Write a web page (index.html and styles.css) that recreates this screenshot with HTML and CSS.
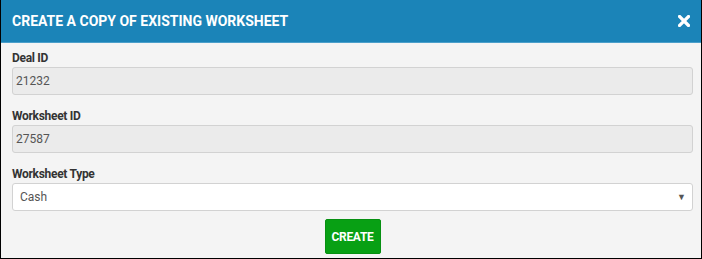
FILE: index.html
```html
<!DOCTYPE html>
<html>
<head>
<meta charset="utf-8">
<link rel="stylesheet" href="styles.css">
</head>
<body>
<div class="dialog">
  <div class="dialog-header">
    <h1 class="dialog-title">CREATE A COPY OF EXISTING WORKSHEET</h1>
    <span class="close" aria-label="close">
      <svg width="12" height="12" viewBox="0 0 12 12"><path d="M1.5 1.5 L10.5 10.5 M10.5 1.5 L1.5 10.5" stroke="#fff" stroke-width="3.2" stroke-linecap="square"/></svg>
    </span>
  </div>
  <div class="dialog-body">
    <div class="field">
      <label class="field-label">Deal ID</label>
      <div class="input readonly">21232</div>
    </div>
    <div class="field">
      <label class="field-label">Worksheet ID</label>
      <div class="input readonly">27587</div>
    </div>
    <div class="field last">
      <label class="field-label">Worksheet Type</label>
      <div class="input select"><span>Cash</span><span class="caret">&#9660;</span></div>
    </div>
    <div class="actions">
      <button class="btn-create">CREATE</button>
    </div>
  </div>
</div>
</body>
</html>
```
FILE: styles.css
```css
html, body {
  margin: 0;
  padding: 0;
}
body {
  width: 702px;
  height: 259px;
  font-family: Roboto, "Liberation Sans", sans-serif;
  background: #f4f4f4;
}
.dialog {
  box-sizing: border-box;
  width: 702px;
  height: 259px;
  border: 1px solid #000;
  border-top: none;
  background: #f4f4f4;
  display: flex;
  flex-direction: column;
}
.dialog-header {
  height: 42px;
  background: #1b84b8;
  border-bottom: 1px solid #4b9fca;
  display: flex;
  align-items: center;
  justify-content: space-between;
  padding: 0 11px 0 11px;
  flex: none;
}
.dialog-title {
  margin: 0;
  color: #fff;
  font-size: 14px;
  font-weight: 700;
  letter-spacing: 0;
  line-height: 17px;
}
.close {
  display: flex;
  width: 12px;
  height: 12px;
}
.dialog-body {
  padding: 7px 8px 0 11px;
}
.field {
  margin-bottom: 13px;
}
.field.last {
  margin-bottom: 8px;
}
.field-label {
  display: block;
  font-size: 12px;
  font-weight: 700;
  color: #333;
  line-height: 17px;
  letter-spacing: -0.3px;
}
.input {
  box-sizing: border-box;
  height: 28px;
  border: 1px solid #d2d2d2;
  border-radius: 3px;
  font-size: 12px;
  color: #555;
  display: flex;
  align-items: center;
}
.input.readonly {
  background: #ebebeb;
  padding-left: 3px;
}
.input.select {
  background: #fff;
  padding: 0 6px 0 7px;
  justify-content: space-between;
}
.caret {
  font-size: 9px;
  color: #555;
}
.actions {
  display: flex;
  justify-content: center;
}
.btn-create {
  width: 56px;
  height: 35px;
  background: #08a014;
  border: 1px solid #079012;
  border-radius: 2px;
  color: #fff;
  font-family: Roboto, "Liberation Sans", sans-serif;
  font-size: 12px;
  font-weight: 700;
  letter-spacing: -0.3px;
  padding: 0;
}
```
